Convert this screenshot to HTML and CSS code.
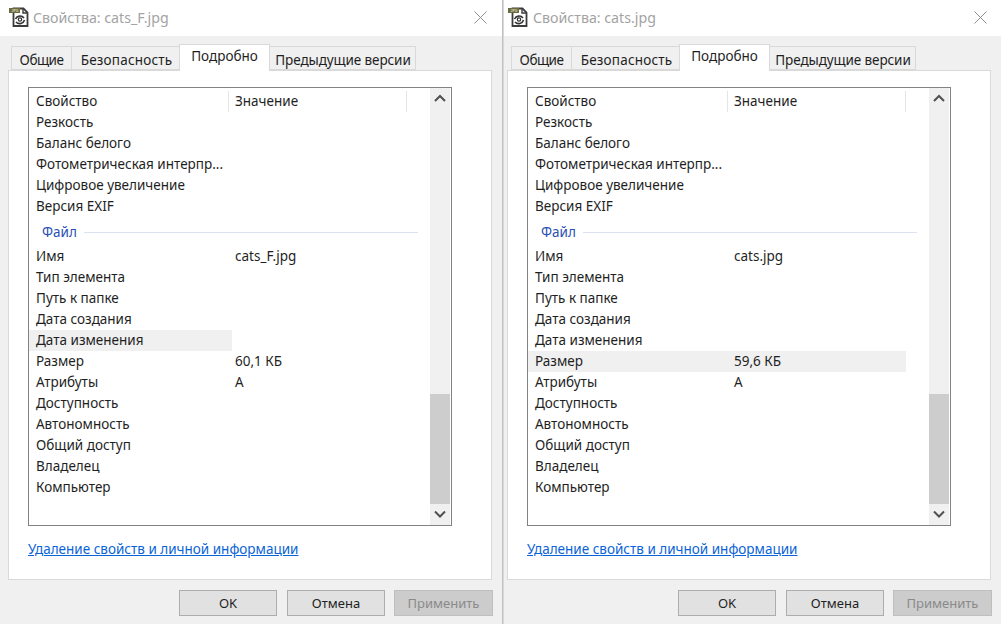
FILE: index.html
```html
<!DOCTYPE html>
<html lang="ru">
<head>
<meta charset="utf-8">
<title>Свойства</title>
<link rel="stylesheet" href="styles.css">
</head>
<body>
<section class="window win-left">
  <header class="titlebar">
    <svg class="file-icon" viewBox="0 0 20 20"><path d="M4.500 1.500h10l4 4v13.500h-14z" fill="#fff" stroke="#3c3c3c" stroke-width="1.800"/><path d="M14 1v5h5" fill="none" stroke="#3c3c3c" stroke-width="1.400"/><rect x="0" y="1" width="11" height="5" fill="#6b6a3a"/><text class="icon-label" x="2.500" y="5">JPG</text><path d="M6.500 12a5 5 0 0 1 8.500-1M15.500 13a5 5 0 0 1-8.500 2" fill="none" stroke="#333" stroke-width="1.600"/><circle cx="11" cy="12.500" r="1.700" fill="none" stroke="#333" stroke-width="1.200"/></svg>
    <span class="title">Свойства: cats_F.jpg</span>
    <svg class="close" viewBox="0 0 13 13"><path d="M.5.500l12 12M12.500.500l-12 12" stroke="#8f8f8f" fill="none"/></svg>
  </header>
  <nav class="tabs">
    <span class="tab t1">Общие</span><span class="tab t2">Безопасность</span><span class="tab t3 active">Подробно</span><span class="tab t4">Предыдущие версии</span>
  </nav>
  <main class="panel">
    <div class="listbox">
      <div class="list">
        <div class="row head"><span class="c1">Свойство</span><span class="c2">Значение</span></div>
        <div class="row"><span class="c1">Резкость</span></div>
        <div class="row"><span class="c1">Баланс белого</span></div>
        <div class="row"><span class="c1">Фотометрическая интерпр...</span></div>
        <div class="row"><span class="c1">Цифровое увеличение</span></div>
        <div class="row"><span class="c1">Версия EXIF</span></div>
        <div class="group"><span>Файл</span></div>
        <div class="row"><span class="c1">Имя</span><span class="c2">cats_F.jpg</span></div>
        <div class="row"><span class="c1">Тип элемента</span></div>
        <div class="row"><span class="c1">Путь к папке</span></div>
        <div class="row"><span class="c1">Дата создания</span></div>
        <div class="row"><span class="c1 hl">Дата изменения</span></div>
        <div class="row"><span class="c1">Размер</span><span class="c2">60,1 КБ</span></div>
        <div class="row"><span class="c1">Атрибуты</span><span class="c2">A</span></div>
        <div class="row"><span class="c1">Доступность</span></div>
        <div class="row"><span class="c1">Автономность</span></div>
        <div class="row"><span class="c1">Общий доступ</span></div>
        <div class="row"><span class="c1">Владелец</span></div>
        <div class="row"><span class="c1">Компьютер</span></div>
      </div>
      <div class="scrollbar">
        <svg class="arrow" viewBox="0 0 20 20"><path d="M5 13l5-5 5 5" fill="none" stroke="#505050" stroke-width="2"/></svg>
        <div class="track"><div class="thumb"></div></div>
        <svg class="arrow" viewBox="0 0 20 20"><path d="M5 7l5 5 5-5" fill="none" stroke="#505050" stroke-width="2"/></svg>
      </div>
    </div>
    <a class="link">Удаление свойств и личной информации</a>
  </main>
  <footer class="buttons">
    <span class="btn">OK</span><span class="btn">Отмена</span><span class="btn disabled">Применить</span>
  </footer>
</section>
<section class="window win-right">
  <header class="titlebar">
    <svg class="file-icon" viewBox="0 0 20 20"><path d="M4.500 1.500h10l4 4v13.500h-14z" fill="#fff" stroke="#3c3c3c" stroke-width="1.800"/><path d="M14 1v5h5" fill="none" stroke="#3c3c3c" stroke-width="1.400"/><rect x="0" y="1" width="11" height="5" fill="#6b6a3a"/><text class="icon-label" x="2.500" y="5">JPG</text><path d="M6.500 12a5 5 0 0 1 8.500-1M15.500 13a5 5 0 0 1-8.500 2" fill="none" stroke="#333" stroke-width="1.600"/><circle cx="11" cy="12.500" r="1.700" fill="none" stroke="#333" stroke-width="1.200"/></svg>
    <span class="title">Свойства: cats.jpg</span>
    <svg class="close" viewBox="0 0 13 13"><path d="M.5.500l12 12M12.500.500l-12 12" stroke="#8f8f8f" fill="none"/></svg>
  </header>
  <nav class="tabs">
    <span class="tab t1">Общие</span><span class="tab t2">Безопасность</span><span class="tab t3 active">Подробно</span><span class="tab t4">Предыдущие версии</span>
  </nav>
  <main class="panel">
    <div class="listbox">
      <div class="list">
        <div class="row head"><span class="c1">Свойство</span><span class="c2">Значение</span></div>
        <div class="row"><span class="c1">Резкость</span></div>
        <div class="row"><span class="c1">Баланс белого</span></div>
        <div class="row"><span class="c1">Фотометрическая интерпр...</span></div>
        <div class="row"><span class="c1">Цифровое увеличение</span></div>
        <div class="row"><span class="c1">Версия EXIF</span></div>
        <div class="group"><span>Файл</span></div>
        <div class="row"><span class="c1">Имя</span><span class="c2">cats.jpg</span></div>
        <div class="row"><span class="c1">Тип элемента</span></div>
        <div class="row"><span class="c1">Путь к папке</span></div>
        <div class="row"><span class="c1">Дата создания</span></div>
        <div class="row"><span class="c1">Дата изменения</span></div>
        <div class="row hl-row"><span class="c1">Размер</span><span class="c2">59,6 КБ</span></div>
        <div class="row"><span class="c1">Атрибуты</span><span class="c2">A</span></div>
        <div class="row"><span class="c1">Доступность</span></div>
        <div class="row"><span class="c1">Автономность</span></div>
        <div class="row"><span class="c1">Общий доступ</span></div>
        <div class="row"><span class="c1">Владелец</span></div>
        <div class="row"><span class="c1">Компьютер</span></div>
      </div>
      <div class="scrollbar">
        <svg class="arrow" viewBox="0 0 20 20"><path d="M5 13l5-5 5 5" fill="none" stroke="#505050" stroke-width="2"/></svg>
        <div class="track"><div class="thumb"></div></div>
        <svg class="arrow" viewBox="0 0 20 20"><path d="M5 7l5 5 5-5" fill="none" stroke="#505050" stroke-width="2"/></svg>
      </div>
    </div>
    <a class="link">Удаление свойств и личной информации</a>
  </main>
  <footer class="buttons">
    <span class="btn">OK</span><span class="btn">Отмена</span><span class="btn disabled">Применить</span>
  </footer>
</section>
</body>
</html>
```

FILE: styles.css
```css
* { box-sizing: border-box; }
html, body { margin: 0; height: 100%; }
body {
  width: 1001px;
  height: 624px;
  overflow: hidden;
  display: flex;
  justify-content: space-between;
  background: #bcbcbc;
  font-family: "Noto Sans", "Open Sans", sans-serif;
  font-size: 13.5px;
  color: #1f1f1f;
}
.window {
  width: 502px;
  height: 624px;
  flex: none;
  background: #f0f0f0;
  display: flex;
  flex-direction: column;
}
.win-right { width: 497px; box-shadow: -1px 0 1px #d8d8d8; }
.win-right .titlebar { padding-left: 4px; }
.win-right .title { margin-left: 5px; }
.win-right .tabs { padding-left: 7px; }
.win-right .panel { margin-left: 3px; margin-right: 10px; }
.win-right .buttons { padding-left: 174px; }
.titlebar {
  height: 36px;
  background: #fff;
  display: flex;
  align-items: center;
  padding-left: 9px;
  flex: none;
}
.file-icon { width: 20px; height: 20px; flex: none; margin-top: -2px; }
.icon-label { font-family: "Liberation Sans", sans-serif; font-size: 3.500px; font-weight: 700; fill: #d8d8c8; }
.title { margin-left: 4px; font-size: 14.2px; color: #a3a3a3; margin-top: -1px; }
.close { width: 13px; height: 13px; margin-left: auto; margin-right: 15px; margin-top: -2px; }
.win-right .close { margin-right: 14px; }
.tabs {
  height: 35px;
  flex: none;
  display: flex;
  align-items: flex-end;
  padding-left: 11px;
  position: relative;
  z-index: 1;
  margin-bottom: -1px;
}
.tab {
  height: 24px;
  border: 1px solid #d9d9d9;
  background: #f0f0f0;
  display: flex;
  align-items: center;
  justify-content: center;
  margin-right: -1px;
  margin-bottom: 1px;
  padding-top: 3px;
}
.t1 { width: 61px; letter-spacing: -.5px; }
.t2 { width: 109px; letter-spacing: .2px; padding-left: 2px; }
.t3 { width: 91px; }
.t4 { width: 147px; letter-spacing: -.1px; padding-left: 1px; }
.tab.active {
  height: 27px;
  background: #fff;
  border-bottom: none;
  margin-bottom: 0;
  padding-top: 0;
  padding-bottom: 4px;
  position: relative;
  z-index: 1;
}
.panel {
  flex: none;
  height: 510px;
  margin: 0 10px 0 8px;
  background: #fff;
  border: 1px solid #d9d9d9;
  padding: 16px 39px 0 19px;
}
.listbox {
  height: 439px;
  border: 1px solid #828282;
  display: flex;
  background: #fff;
}
.list { flex: 1; padding-top: 3px; min-width: 0; }
.row {
  height: 21px;
  display: flex;
  align-items: center;
}
.c1 {
  width: 203px;
  height: 21px;
  line-height: 21px;
  padding-left: 7px;
  flex: none;
}
.c2 { padding-left: 3px; height: 21px; line-height: 21px; }
.head .c1 { border-right: 1px solid #e5e5e5; width: 200px; }
.head .c2 { width: 178px; border-right: 1px solid #e5e5e5; padding-left: 6px; }
.hl { background: #f0f0f0; }
.hl-row { background: #f0f0f0; width: 378px; }
.group {
  height: 28px;
  padding: 2px 10px 0 13px;
  display: flex;
  align-items: center;
  gap: 7px;
  color: #2a4fb5;
  margin-bottom: 1px;
}
.group::after { content: ""; flex: 1; height: 1px; background: #dbe2f2; }
.scrollbar {
  width: 20px;
  margin-left: 2px;
  background: #f0f0f0;
  display: flex;
  flex-direction: column;
  flex: none;
  margin-right: 1px;
}
.arrow { width: 20px; height: 20px; flex: none; }
.arrow:last-child { height: 21px; }
.track { flex: 1; position: relative; }
.thumb { position: absolute; left: 0; right: 0; bottom: 0; height: 110px; background: #cdcdcd; }
.link {
  display: block;
  margin-top: 14px;
  color: #0a64d8;
  text-decoration: underline;
  line-height: 18px;
}
.buttons {
  flex: none;
  display: flex;
  gap: 10px;
  padding: 10px 0 0 179px;
  font-size: 13px;
}
.btn {
  width: 98px;
  height: 26px;
  background: #e1e1e1;
  border: 1px solid #adadad;
  display: flex;
  align-items: center;
  justify-content: center;
}
.btn.disabled { background: #cccccc; border-color: #bfbfbf; color: #8a8a8a; margin-left: -1px; width: 99px; }
```
